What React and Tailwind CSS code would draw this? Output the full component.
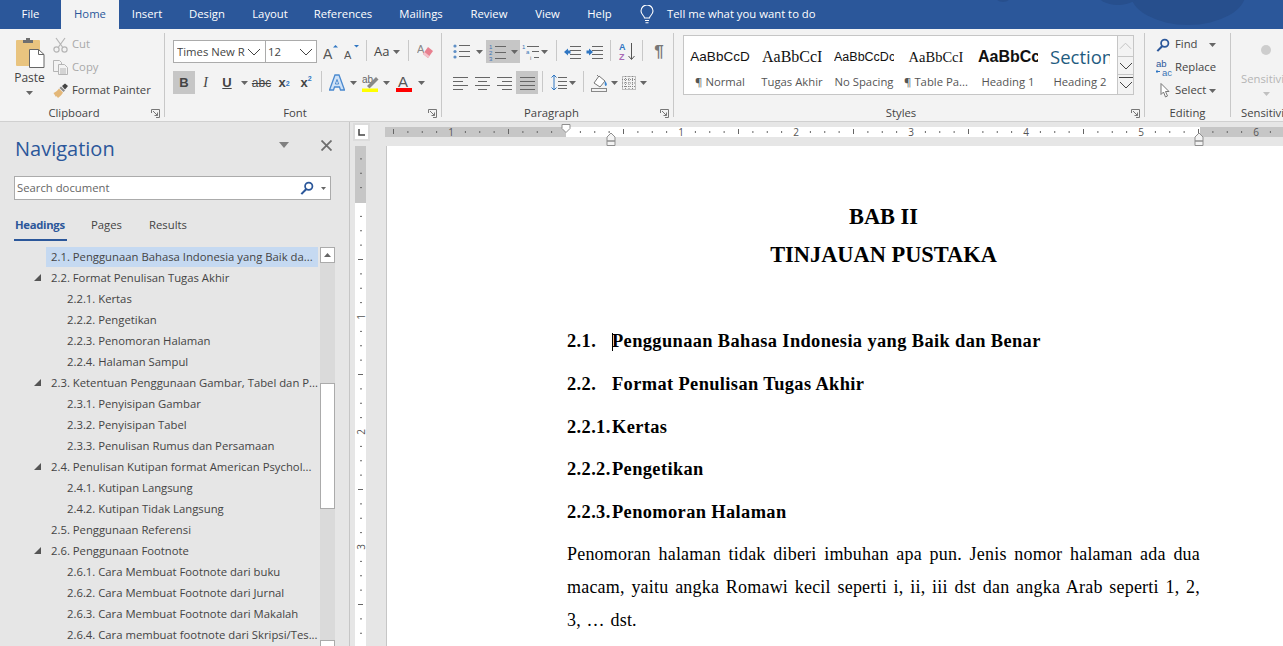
import React from "react";

const tabs = [
  ["File", "w-[61px]"], ["Home", "w-[58px]"], ["Insert", "w-[56px]"], ["Design", "w-[64px]"], ["Layout", "w-[62px]"],
  ["References", "w-[84px]"], ["Mailings", "w-[72px]"], ["Review", "w-[64px]"], ["View", "w-[53px]"], ["Help", "w-[51px]"],
];

const tree = [
  [2, "2.1. Penggunaan Bahasa Indonesia yang Baik da...", false, true],
  [2, "2.2. Format Penulisan Tugas Akhir", true],
  [3, "2.2.1. Kertas"], [3, "2.2.2. Pengetikan"], [3, "2.2.3. Penomoran Halaman"], [3, "2.2.4. Halaman Sampul"],
  [2, "2.3. Ketentuan Penggunaan Gambar, Tabel dan P...", true],
  [3, "2.3.1. Penyisipan Gambar"], [3, "2.3.2. Penyisipan Tabel"], [3, "2.3.3. Penulisan Rumus dan Persamaan"],
  [2, "2.4. Penulisan Kutipan format American Psychol...", true],
  [3, "2.4.1. Kutipan Langsung"], [3, "2.4.2. Kutipan Tidak Langsung"],
  [2, "2.5. Penggunaan Referensi"],
  [2, "2.6. Penggunaan Footnote", true],
  [3, "2.6.1. Cara Membuat Footnote dari buku"], [3, "2.6.2. Cara Membuat Footnote dari Jurnal"],
  [3, "2.6.3. Cara Membuat Footnote dari Makalah"], [3, "2.6.4. Cara membuat footnote dari Skripsi/Tes..."],
];

const styleItems = [
  ["AaBbCcD", "¶ Normal", "font-['Liberation_Sans',sans-serif] text-[13.5px] text-[#111]"],
  ["AaBbCcI", "Tugas Akhir", "font-['Liberation_Serif',serif] text-[16px] text-[#111]"],
  ["AaBbCcDc", "No Spacing", "font-['Liberation_Sans',sans-serif] text-[12.5px] text-[#111]"],
  ["AaBbCcI", "¶ Table Pa...", "font-['Liberation_Serif',serif] text-[14.5px] text-[#111]"],
  ["AaBbCc", "Heading 1", "font-['Liberation_Sans',sans-serif] font-bold text-[16px] text-[#111]"],
  ["Section", "Heading 2", "font-['Open_Sans',sans-serif] text-[18.5px] text-[#1f5c7f]"],
];

const Caret = ({ c = "#666" }) => (
  <svg width="7" height="4" viewBox="0 0 7 4"><path d="M0 0h7L3.5 4z" fill={c} /></svg>
);
const CaretSlot = ({ className }) => (
  <span className={`flex items-center justify-center ${className}`}><Caret /></span>
);
const Sep = ({ className = "" }) => <span className={`w-px h-[21px] bg-[#c8c8c8] ${className}`} />;
const Slot = ({ className = "", children }) => (
  <span className={`flex items-center justify-center h-full ${className}`}>{children}</span>
);

const Launcher = () => (
  <svg width="9" height="9" viewBox="0 0 9 9" fill="none" stroke="#777">
    <path d="M.5 4V.5h8v8H5" /><path d="M2 2l4.5 4.5M6.5 3.5v3h-3" />
  </svg>
);

const Group = ({ className, label, launcher, children, labelClass = "text-center" }) => (
  <div className={`relative flex flex-col shrink-0 ${className}`}>
    <div className="h-[75px]">{children}</div>
    <div className={`h-[18px] leading-[20px] text-[11.3px] text-[#444] whitespace-nowrap ${labelClass}`}>{label}</div>
    {launcher && <span className="absolute right-[4px] bottom-[3px] flex"><Launcher /></span>}
  </div>
);

const Lines = ({ w = 15, x = 0, ys, c = "#777", lens }) => (
  <>
    {ys.map((y, i) => (
      <path key={i} d={`M${lens ? lens[i][0] : x} ${y}.5H${lens ? lens[i][1] : x + w}`} stroke={c} />
    ))}
  </>
);

const Bullets = () => (
  <svg width="18" height="17" viewBox="0 0 18 17">
    <circle cx="2" cy="3" r="1.6" fill="#5f8fc5" /><circle cx="2" cy="8.5" r="1.6" fill="#5f8fc5" /><circle cx="2" cy="14" r="1.6" fill="#5f8fc5" />
    <Lines x={6} w={11} ys={[2, 8, 13]} c="#666" />
  </svg>
);
const Numbering = () => (
  <svg width="17" height="18" viewBox="0 0 17 18">
    <text x="0" y="6" fontSize="6" fill="#3b73b5" fontFamily="Liberation Sans">1</text>
    <text x="0" y="12" fontSize="6" fill="#3b73b5" fontFamily="Liberation Sans">2</text>
    <text x="0" y="18" fontSize="6" fill="#3b73b5" fontFamily="Liberation Sans">3</text>
    <Lines x={6} w={11} ys={[3, 9, 15]} c="#666" />
  </svg>
);
const Multi = () => (
  <svg width="18" height="18" viewBox="0 0 18 18">
    <text x="0" y="6" fontSize="6" fill="#3b73b5" fontFamily="Liberation Sans">1</text>
    <text x="4" y="11" fontSize="6" fill="#3b73b5" fontFamily="Liberation Sans">a</text>
    <text x="8" y="17" fontSize="6" fill="#777" fontFamily="Liberation Sans">i</text>
    <Lines lens={[[5, 17], [10, 17], [12, 17]]} ys={[3, 8, 14]} c="#666" />
  </svg>
);
const Indent = ({ dir }) => (
  <svg width="17" height="14" viewBox="0 0 17 14">
    <Lines x={6} w={11} ys={[1, 5, 9, 13]} c="#666" />
    {dir < 0 ? <path d="M0 7l4-3.5v2h2.5v3H4v2z" fill="#2f76c2" /> : <path d="M7 7L3 3.5v2H.5v3H3v2z" fill="#2f76c2" />}
  </svg>
);
const Align = ({ kind }) => {
  const sets = {
    left: [[0, 15], [0, 10], [0, 15], [0, 10]],
    center: [[0, 15], [3, 12], [0, 15], [3, 12]],
    right: [[0, 15], [5, 15], [0, 15], [5, 15]],
    just: [[0, 15], [0, 15], [0, 15], [0, 15]],
  };
  return <svg width="15" height="14" viewBox="0 0 15 14"><Lines lens={sets[kind]} ys={[1, 5, 9, 13]} c="#666" /></svg>;
};

const Sort = () => (
  <svg width="17" height="20" viewBox="0 0 17 20">
    <text x="0" y="8" fontSize="9" fontWeight="bold" fill="#2f76c2" fontFamily="Liberation Sans">A</text>
    <text x="0" y="18" fontSize="9" fontWeight="bold" fill="#a86ab5" fontFamily="Liberation Sans">Z</text>
    <path d="M12.5 1v16M9.5 14l3 3.5 3-3.5" stroke="#555" fill="none" />
  </svg>
);
const LineSpacing = () => (
  <svg width="16" height="17" viewBox="0 0 16 17">
    <path d="M3 1v15M.5 3.5L3 1l2.500 2.500M.5 13.500L3 16l2.500-2.500" stroke="#2f76c2" fill="none" />
    <Lines x={7} w={9} ys={[3, 7, 11, 14]} c="#666" />
  </svg>
);
const Shading = () => (
  <svg width="17" height="18" viewBox="0 0 17 18" fill="none">
    <path d="M3 9l5-7 6 5-5 6z" stroke="#777" fill="#fff" />
    <path d="M6 1l2 2" stroke="#777" />
    <path d="M14 7c1.500 2 2.500 3 1.500 4.500S13 11 14 7z" fill="#3b86d1" />
    <rect x=".5" y="14.500" width="15" height="3" stroke="#888" fill="#f3f3f3" />
  </svg>
);
const Borders = () => (
  <svg width="14" height="14" viewBox="0 0 14 14" fill="none" stroke="#888" strokeDasharray="1 1">
    <rect x=".5" y=".5" width="13" height="13" /><path d="M7 0v14M0 7h14M3.500 0v14M10.500 0v14M0 3.500h14M0 10.500h14" />
  </svg>
);

const PasteIcon = () => (
  <svg width="30" height="31" viewBox="0 0 30 31">
    <rect x="1" y="3" width="24" height="26" rx="1" fill="#e9c47f" />
    <path d="M8 6V3h3V1h4v2h3v3z" fill="#6f6f6f" />
    <path d="M14.500 12.500h9l5.500 5v13H14.500z" fill="#fff" stroke="#666" />
    <path d="M23.500 12.500v5h5.500" fill="none" stroke="#666" />
  </svg>
);
const CutIcon = () => (
  <svg width="15" height="16" viewBox="0 0 15 16" fill="none" stroke="#b5b5b5" strokeWidth="1.200">
    <path d="M3 1l6.500 9M12 1L5.500 10" /><circle cx="3.500" cy="12.500" r="2.600" /><circle cx="11.500" cy="12.500" r="2.600" />
  </svg>
);
const CopyIcon = () => (
  <svg width="15" height="15" viewBox="0 0 15 15" fill="#f3f3f3" stroke="#b5b5b5">
    <path d="M.5.500h6l2 2v9h-8z" /><path d="M5.500 4.500h6l3 3v7h-9z" /><path d="M7 9h6M7 11h6M7 13h6" />
  </svg>
);
const PainterIcon = () => (
  <svg width="16" height="15" viewBox="0 0 16 15">
    <path d="M9 3l3-2.500 3 2.500-3 3.500z" fill="#444" />
    <path d="M8 3.500l4 4-1.500 1.500-4-4z" fill="#8a8a8a" />
    <path d="M6 5.500l4 4c-1 2-3 4-5 5.500L3.500 13 3 14 .5 10c2-1 4-2.500 5.500-4.500z" fill="#e3b778" />
  </svg>
);
const Eraser = () => (
  <svg width="16" height="17" viewBox="0 0 16 17">
    <text x="0" y="10" fontSize="11" fill="#888" fontFamily="Liberation Sans">A</text>
    <path d="M11 4l5 4-5 7-5-4z" fill="#e8808f" />
    <path d="M6 11l5 4 1.500-2-5-4z" fill="#f3c3cb" />
  </svg>
);
const GrowIcon = ({ big }) => (
  <svg width="15" height="16" viewBox="0 0 15 16">
    <text x="0" y="15" fontSize={big ? 14 : 11} fill="#555" fontFamily="Liberation Sans">A</text>
    {big ? <path d="M10 3.500L12.500 1 15 3.500z" fill="#2f76c2" /> : <path d="M10 1h5l-2.500 2.500z" fill="#2f76c2" />}
  </svg>
);
const TextEffect = () => (
  <svg width="16" height="17" viewBox="0 0 16 17">
    <path d="M6 1h4l5.500 15h-4l-1-3h-5l-1 3H.5z" fill="#cfe2f7" stroke="#4a89cf" strokeWidth="1.300" />
    <path d="M8 5.500L6.400 10h3.200z" fill="#fff" stroke="#4a89cf" />
  </svg>
);
const Highlight = () => (
  <svg width="17" height="18" viewBox="0 0 17 18">
    <text x="0" y="9" fontSize="10" fill="#666" fontFamily="Liberation Sans">ab</text>
    <path d="M5 12l9-9 2.500 2.500-9 9z" fill="#888" />
    <rect x="0" y="14.500" width="16" height="3.500" fill="#ffff00" />
  </svg>
);
const FontColor = () => (
  <svg width="16" height="18" viewBox="0 0 16 18">
    <text x="2" y="13" fontSize="15" fill="#555" fontFamily="Liberation Sans">A</text>
    <rect x="0" y="14" width="16" height="4" fill="#f00" />
  </svg>
);
const Search = ({ c = "#2b579a", s = 16 }) => (
  <svg width={s} height={s} viewBox="0 0 16 16" fill="none" stroke={c}>
    <circle cx="10" cy="6" r="4.200" strokeWidth="2" /><path d="M7 9.500L1.500 15" strokeWidth="2.400" />
  </svg>
);
const ReplaceIcon = () => (
  <svg width="17" height="18" viewBox="0 0 17 18">
    <text x="0" y="7.500" fontSize="9.500" fill="#2b579a" fontFamily="Liberation Sans">ab</text>
    <text x="6" y="17" fontSize="9.500" fill="#3b73b5" fontFamily="Liberation Sans">ac</text>
    <path d="M0 12.500h4M1.500 11L0 12.500 1.500 14" stroke="#2f76c2" fill="none" />
  </svg>
);
const SelectIcon = () => (
  <svg width="11" height="15" viewBox="0 0 11 15"><path d="M1 .5v11l2.500-2.500 2 5 2-1-2-4.500H9z" fill="#fff" stroke="#777" /></svg>
);
const Bulb = () => (
  <svg width="14" height="19" viewBox="0 0 14 19" fill="none" stroke="#fff" strokeWidth="1.100">
    <path d="M4.500 13c0-2-3.500-3.500-3.500-7a6 6 0 0112 0c0 3.500-3.500 5-3.500 7z" /><path d="M5 15.500h4M5.500 17.700h3" />
  </svg>
);
const Chevron = () => (
  <svg width="14" height="8" viewBox="0 0 14 8" fill="none" stroke="#444"><path d="M1 1l6 6 6-6" /></svg>
);

const Horizontal = () => {
  const o = 181;
  const ticks = [];
  for (let k = -12; k <= 50; k++) {
    const x = o + k * 14.375;
    if (k === 0 || x < 2 || x > 898) continue;
    if (k % 8 === 0) {
      ticks.push(<text key={k} x={x} y="14" textAnchor="middle" fontSize="10" fill="#555" fontFamily="Open Sans">{Math.abs(k / 8)}</text>);
    } else if (k % 4 === 0) {
      ticks.push(<path key={k} d={`M${x} 7v5`} stroke="#666" />);
    } else {
      ticks.push(<path key={k} d={`M${x} 9v2`} stroke="#666" />);
    }
  }
  return (
    <svg width="898" height="24" viewBox="0 0 898 24" className="shrink-0 block">
      <rect x="0" y="5" width="181" height="10" fill="#c6c6c6" />
      <rect x="181" y="5" width="634" height="10" fill="#fff" />
      <rect x="815" y="5" width="83" height="10" fill="#c6c6c6" />
      {ticks}
      <path d="M177 2.500h8v4l-4 4-4-4z" fill="#fff" stroke="#8f8f8f" />
      <path d="M222 19v-4l4-4 4 4v4zM222 19h8v4.500h-8z" fill="#f3f3f3" stroke="#8f8f8f" />
      <path d="M810 19v-4l4-4 4 4v4zM810 19h8v4.500h-8z" fill="#f3f3f3" stroke="#8f8f8f" />
    </svg>
  );
};

const Vertical = () => {
  const o = 56;
  const ticks = [];
  for (let k = -3; k <= 34; k++) {
    const y = o + k * 14.375;
    if (k === 0 || y < 2) continue;
    if (k % 8 === 0) {
      ticks.push(<text key={k} x="5.500" y={y} textAnchor="middle" dominantBaseline="central" fontSize="10" fill="#555" fontFamily="Open Sans" transform={`rotate(-90 5.500 ${y})`}>{k / 8}</text>);
    } else if (k % 4 === 0) {
      ticks.push(<path key={k} d={`M3 ${y}h5`} stroke="#666" />);
    } else {
      ticks.push(<path key={k} d={`M5 ${y}h2`} stroke="#666" />);
    }
  }
  return (
    <svg width="11" height="500" viewBox="0 0 11 500" className="block">
      <rect width="11" height="57" fill="#c6c6c6" />
      <rect y="57" width="11" height="443" fill="#fff" />
      {ticks}
    </svg>
  );
};

export default function App() {
  return (
    <div className="w-[1283px] h-[646px] overflow-hidden flex flex-col bg-[#e6e6e6] font-['Open_Sans',sans-serif] text-[#444]">
      <div className="relative h-[29px] shrink-0 flex items-stretch bg-[#2b579a] text-white text-[11.3px] overflow-hidden">
        <svg width="320" height="29" viewBox="0 0 320 29" className="absolute right-0 top-0">
          <ellipse cx="225" cy="-8" rx="58" ry="33" fill="#274f8d" />
          <ellipse cx="155" cy="-8" rx="22" ry="13" fill="#274f8d" />
          <ellipse cx="40" cy="-6" rx="9" ry="8" fill="#274f8d" />
        </svg>
        {tabs.map(([t, w]) => (
          <div key={t} className={`flex items-center justify-center ${w} ${t === "Home" ? "bg-[#f3f3f3] text-[#2b579a]" : ""}`}>{t}</div>
        ))}
        <div className="flex items-center ml-[15px]"><Bulb /></div>
        <div className="flex items-center ml-[13px]">Tell me what you want to do</div>
      </div>

      <div className="h-[93px] shrink-0 flex bg-[#f3f3f3] border-b border-[#d0d0d0] text-[11.3px] overflow-hidden">
        <Group className="w-[164px]" label="Clipboard" launcher labelClass="text-center pr-[16px]">
          <div className="flex h-full">
            <div className="w-[52px] flex flex-col items-center pl-[7px] pt-[8px]">
              <PasteIcon />
              <span className="mt-[3px] text-[12px] leading-[14px]">Paste</span>
              <span className="mt-[6px] flex"><Caret /></span>
            </div>
            <div className="flex flex-col pl-[1px] pt-[4px]">
              {[
                [<CutIcon />, "Cut", "text-[#a9a9a9]"],
                [<CopyIcon />, "Copy", "text-[#a9a9a9]"],
                [<PainterIcon />, "Format Painter", "text-[#444]"],
              ].map(([icon, t, c], i) => (
                <div key={i} className={`flex items-center h-[23px] ${c}`}>
                  <span className="w-[19px] flex">{icon}</span>{t}
                </div>
              ))}
            </div>
          </div>
        </Group>
        <Sep className="h-[84px]! mt-[4px]" />
        <Group className="w-[276px]" label="Font" launcher labelClass="text-center pr-[16px]">
          <div className="pl-[8px] pt-[11px]">
            <div className="flex items-stretch h-[23px]">
              <div className="w-[93px] bg-white border border-[#ababab] flex items-center pl-[3px] pr-[4px] justify-between overflow-hidden whitespace-nowrap">
                <span className="w-[68px] overflow-hidden pt-[1px]">Times New R</span><Chevron />
              </div>
              <div className="w-[51px] bg-white border border-l-0 border-[#ababab] flex items-center pl-[2px] pr-[3px] justify-between">
                <span className="pt-[1px]">12</span><Chevron />
              </div>
              <Slot className="w-[20px] ml-[3px]"><GrowIcon big /></Slot>
              <Slot className="w-[21px] ml-[1px]"><GrowIcon /></Slot>
              <Sep className="ml-[4px]" />
              <Slot className="w-[34px] ml-[6px] gap-[4px] justify-start pl-[1px] text-[13px]">Aa<Caret /></Slot>
              <Sep className="ml-[1px]" />
              <Slot className="w-[18px] ml-[7px]"><Eraser /></Slot>
            </div>
            <div className="flex items-stretch h-[23px] mt-[8px] font-['Liberation_Sans',sans-serif]">
              <Slot className="w-[22px] bg-[#c6c6c6] font-bold text-[13px]">B</Slot>
              <Slot className="w-[21px] italic text-[14px] font-['Liberation_Serif',serif]">I</Slot>
              <Slot className="w-[22px] font-bold underline text-[13px]">U</Slot>
              <CaretSlot className="w-[12px]" />
              <Slot className="w-[23px] line-through text-[12px]">abc</Slot>
              <Slot className="w-[22px] font-bold text-[13px]">x<sub className="text-[7px] text-[#2f76c2]">2</sub></Slot>
              <Slot className="w-[22px] font-bold text-[13px]">x<sup className="text-[7px] text-[#2f76c2]">2</sup></Slot>
              <Sep className="ml-[4px]" />
              <Slot className="w-[24px] ml-[3px]"><TextEffect /></Slot>
              <CaretSlot className="w-[8px]" />
              <Slot className="w-[24px] ml-[1px]"><Highlight /></Slot>
              <CaretSlot className="w-[9px]" />
              <Slot className="w-[24px] ml-[1px]"><FontColor /></Slot>
              <CaretSlot className="w-[10px]" />
            </div>
          </div>
        </Group>
        <Sep className="h-[84px]! mt-[4px]" />
        <Group className="w-[231px]" label="Paragraph" launcher labelClass="text-center pr-[12px]">
          <div className="pl-[11px] pt-[11px]">
            <div className="flex items-stretch h-[23px]">
              <Slot className="w-[18px]"><Bullets /></Slot>
              <CaretSlot className="w-[13px] ml-[1px] pl-[2px]" />
              <div className="w-[34px] ml-[1px] bg-[#c6c6c6] flex items-center gap-[5px] pl-[3px]"><Numbering /><Caret /></div>
              <Slot className="w-[18px] ml-[2px]"><Multi /></Slot>
              <CaretSlot className="w-[9px]" />
              <Sep className="ml-[7px]" />
              <Slot className="w-[17px] ml-[7px]"><Indent dir={-1} /></Slot>
              <Slot className="w-[17px] ml-[5px]"><Indent dir={1} /></Slot>
              <Sep className="ml-[7px]" />
              <Slot className="w-[17px] ml-[8px]"><Sort /></Slot>
              <Sep className="ml-[6px]" />
              <Slot className="w-[22px] ml-[1px] pl-[8px] text-[17px] font-['Liberation_Sans',sans-serif] font-bold text-[#777]">¶</Slot>
            </div>
            <div className="flex items-stretch h-[23px] mt-[8px]">
              <Slot className="w-[15px]"><Align kind="left" /></Slot>
              <Slot className="w-[15px] ml-[7px]"><Align kind="center" /></Slot>
              <Slot className="w-[15px] ml-[7px]"><Align kind="right" /></Slot>
              <Slot className="w-[22px] ml-[4px] bg-[#c6c6c6]"><Align kind="just" /></Slot>
              <Sep className="ml-[4px]" />
              <Slot className="w-[16px] ml-[8px]"><LineSpacing /></Slot>
              <CaretSlot className="w-[10px]" />
              <Sep className="ml-[6px]" />
              <Slot className="w-[17px] ml-[7px]"><Shading /></Slot>
              <CaretSlot className="w-[11px] ml-[1px]" />
              <Slot className="w-[14px] ml-[2px]"><Borders /></Slot>
              <CaretSlot className="w-[15px]" />
            </div>
          </div>
        </Group>
        <Sep className="h-[84px]! mt-[4px]" />
        <Group className="w-[470px]" label="Styles" launcher labelClass="text-center pr-[16px]">
          <div className="pl-[9px] pt-[6px] flex">
            <div className="w-[435px] h-[60px] bg-white border border-[#c6c6c6] flex">
              {styleItems.map(([s, l, c]) => (
                <div key={l} className="w-[72px] flex flex-col items-center">
                  <div className={`w-[60px] h-[36px] overflow-hidden whitespace-nowrap leading-[42px] text-center ${c}`}>{s}</div>
                  <div className="text-[11.3px] leading-[20px] whitespace-nowrap text-[#555]">{l}</div>
                </div>
              ))}
            </div>
            <div className="w-[16px] h-[60px] flex flex-col border border-l-0 border-[#c6c6c6]">
              <span className="h-[20px] flex items-center justify-center"><svg width="13" height="8" viewBox="0 0 14 8" fill="none" stroke="#c0c0c0"><path d="M1 7l6-6 6 6" /></svg></span>
              <span className="h-[19px] flex items-center justify-center border-y border-[#c6c6c6]"><Chevron /></span>
              <span className="flex-1 flex flex-col items-center pt-[2px] gap-[3px]"><span className="w-[14px] h-px bg-[#444]" /><Chevron /></span>
            </div>
          </div>
        </Group>
        <Sep className="h-[84px]! mt-[4px]" />
        <Group className="w-[85px]" label="Editing">
          <div className="flex flex-col pl-[11px] pt-[4px]">
            <div className="flex items-center h-[23px]"><span className="w-[19px] flex"><Search s={14} /></span>Find<span className="ml-[11px] flex"><Caret /></span></div>
            <div className="flex items-center h-[23px]"><span className="w-[19px] flex"><ReplaceIcon /></span>Replace</div>
            <div className="flex items-center h-[23px]"><span className="w-[19px] flex pl-[4px]"><SelectIcon /></span>Select<span className="ml-[3px] flex"><Caret /></span></div>
          </div>
        </Group>
        <Sep className="h-[84px]! mt-[4px]" />
        <Group className="w-[52px] pl-[10px]" label="Sensitivity" labelClass="text-left">
          <div className="flex flex-col">
            <span className="w-[10px] h-[10px] rounded-full bg-[#cdcdcd] mt-[16px] ml-[20px]" />
            <span className="mt-[16px] text-[#b5b5b5] leading-[16px] whitespace-nowrap">Sensitivity</span>
            <span className="mt-[5px] ml-[22px] flex"><Caret c="#c0c0c0" /></span>
          </div>
        </Group>
      </div>

      <div className="flex-1 flex min-h-0">
        <div className="w-[350px] shrink-0 border-r border-[#c6c6c6] flex flex-col overflow-hidden">
          <div className="h-[53px] mb-[1px] flex items-center pl-[15px]">
            <span className="text-[20px] text-[#2b579a] w-[264px]">Navigation</span>
            <span className="mb-[7px] flex"><svg width="10" height="6" viewBox="0 0 10 6"><path d="M0 0h10L5 6z" fill="#808080" /></svg></span>
            <span className="mb-[7px] ml-[32px] flex"><svg width="11" height="11" viewBox="0 0 11 11" fill="none" stroke="#6e6e6e" strokeWidth="1.800"><path d="M.5.500l10 10M10.500.500l-10 10" /></svg></span>
          </div>
          <div className="ml-[14px] w-[317px] h-[24px] bg-white border border-[#ababab] flex items-center pl-[2px] pr-[4px] text-[11.3px] text-[#666]">
            <span className="flex-1">Search document</span>
            <Search s={14} />
            <span className="ml-[7px] flex"><svg width="5" height="3" viewBox="0 0 5 3"><path d="M0 0h5L2.500 3z" fill="#666" /></svg></span>
          </div>
          <div className="mt-[16px] ml-[14px] h-[25px] flex text-[11.3px] leading-[18px]">
            <div className="w-[53px] border-b-[2.5px] border-[#2b579a] text-[#2b579a] font-bold pl-[1px] tracking-[-0.3px]">Headings</div>
            <div className="ml-[24px] w-[58px]">Pages</div>
            <div>Results</div>
          </div>
          <div className="mt-[5px] flex flex-1 min-h-0">
            <div className="w-[320px] shrink-0 text-[11.3px]">
              {tree.map(([lvl, t, tri, sel]) => (
                <div key={t} className="h-[21px] flex items-center">
                  {lvl === 2 ? (
                    <>
                      <span className="w-[41px] flex justify-end">
                        {tri && <svg width="7" height="7" viewBox="0 0 7 7"><path d="M7 0v7H0z" fill="#555" /></svg>}
                      </span>
                      <span className={`ml-[5px] w-[272px] h-[20px] leading-[20px] pl-[5px] whitespace-nowrap ${sel ? "bg-[#c5d9f1]" : ""}`}>{t}</span>
                    </>
                  ) : (
                    <span className="ml-[67px] h-[20px] leading-[20px] whitespace-nowrap">{t}</span>
                  )}
                </div>
              ))}
            </div>
            <div className="w-[15px] flex flex-col bg-[#dadada] mt-[1px]">
              <div className="h-[16px] shrink-0 bg-white border border-[#ababab] flex items-center justify-center"><svg width="7" height="4" viewBox="0 0 7 4"><path d="M0 4h7L3.500 0z" fill="#666" /></svg></div>
              <div className="h-[120px] shrink-0" />
              <div className="h-[126px] shrink-0 bg-white border border-[#ababab]" />
              <div className="h-[131px] shrink-0" />
              <div className="h-[20px] shrink-0 bg-white border border-[#ababab]" />
            </div>
          </div>
        </div>

        <div className="flex-1 min-w-0 flex flex-col overflow-hidden">
          <div className="h-[24px] flex shrink-0 overflow-hidden">
            <div className="w-[13px] h-[14px] ml-[5px] mt-[3px] bg-white flex items-center justify-center shrink-0 outline-[2px] outline-[#dcdcdc]">
              <svg width="7" height="7" viewBox="0 0 7 7"><path d="M1 0v6h6" fill="none" stroke="#444" strokeWidth="1.500" /></svg>
            </div>
            <div className="ml-[17px]"><Horizontal /></div>
          </div>
          <div className="flex-1 min-h-0 flex">
            <div className="w-[36px] shrink-0 pl-[5px] overflow-hidden"><Vertical /></div>
            <div className="flex-1 bg-white border-l border-[#c6c6c6] pl-[180px] pt-[52px] overflow-hidden font-['Liberation_Serif',serif] text-black">
              <div className="w-[633px]">
                <div className="text-center font-bold text-[22.4px] leading-[38px]">BAB II</div>
                <div className="text-center font-bold text-[22.4px] leading-[38px]">TINJAUAN PUSTAKA</div>
                <div className="mt-[46px] font-bold text-[18.4px] leading-[42.75px] tracking-[0.38px]">
                  <div className="flex"><span className="w-[45px]">2.1.</span><span className="relative"><span className="absolute left-0 top-[13px] w-px h-[18px] bg-black" />Penggunaan Bahasa Indonesia yang Baik dan Benar</span></div>
                  <div className="flex"><span className="w-[45px]">2.2.</span><span>Format Penulisan Tugas Akhir</span></div>
                  <div className="flex"><span className="w-[45px]">2.2.1.</span><span>Kertas</span></div>
                  <div className="flex"><span className="w-[45px]">2.2.2.</span><span>Pengetikan</span></div>
                  <div className="flex"><span className="w-[45px]">2.2.3.</span><span>Penomoran Halaman</span></div>
                </div>
                <div className="mt-[4px] text-[18px] leading-[33px] tracking-[0.2px]">
                  <p className="text-justify [text-align-last:justify]">Penomoran halaman tidak diberi imbuhan apa pun. Jenis nomor halaman ada dua</p>
                  <p className="text-justify [text-align-last:justify]">macam, yaitu angka Romawi kecil seperti i, ii, iii dst dan angka Arab seperti 1, 2,</p>
                  <p className="[word-spacing:1px]">3, … dst.</p>
                </div>
              </div>
            </div>
          </div>
        </div>
      </div>
    </div>
  );
}
